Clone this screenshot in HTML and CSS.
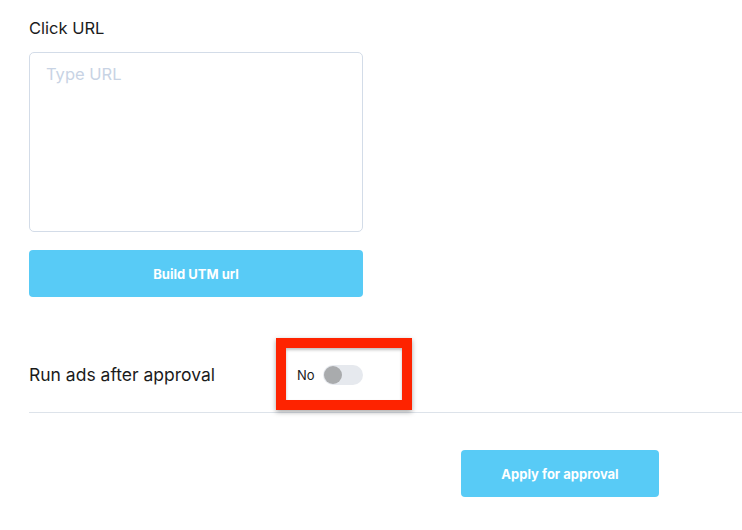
FILE: index.html
```html
<!DOCTYPE html>
<html>
<head>
<meta charset="utf-8">
<link rel="stylesheet" href="styles.css">
</head>
<body>
<div class="page">
  <div class="field">
    <label class="label">Click URL</label>
    <textarea class="url-input" placeholder="Type URL"></textarea>
    <button class="btn btn-wide">Build UTM url</button>
  </div>
  <div class="row">
    <span class="row-label">Run ads after approval</span>
    <div class="toggle-group">
      <span class="toggle-text">No</span>
      <span class="switch"><span class="knob"></span></span>
      <span class="highlight"></span>
    </div>
  </div>
  <div class="actions">
    <button class="btn btn-apply">Apply for approval</button>
  </div>
</div>
</body>
</html>
```
FILE: styles.css
```css
* { box-sizing: border-box; }
html, body { margin: 0; background: #fff; }
body {
  font-family: Inter, "Open Sans", sans-serif;
  color: #1b1b1b;
  width: 742px;
  height: 530px;
  overflow: hidden;
}
.page { padding: 17px 0 0 29px; }
.field { display: flex; flex-direction: column; width: 334px; }
.label { font-size: 16.5px; line-height: 22px; height: 22px; }
.url-input {
  margin-top: 13px;
  width: 334px;
  height: 180px;
  border: 1px solid #d3dce8;
  border-radius: 5px;
  padding: 11px 16px;
  font-family: inherit;
  font-size: 16.5px;
  resize: none;
  outline: none;
}
.url-input::placeholder { color: #c8d3e4; }
.btn {
  border: 0;
  background: #58cbf6;
  color: #fff;
  font-family: inherit;
  font-weight: 700;
  font-size: 13px;
  border-radius: 4px;
  height: 47px;
  padding: 0;
}
.btn-wide { margin-top: 18px; width: 334px; }
.row {
  margin-top: 41px;
  display: flex;
  align-items: center;
  padding: 27px 0 27px;
  border-bottom: 1px solid #dde3ea;
}
.row-label { font-size: 17.5px; width: 268px; line-height: 20px; }
.toggle-group { position: relative; display: flex; align-items: center; height: 20px; }
.toggle-text { font-size: 13px; width: 26px; }
.switch {
  width: 40px;
  height: 20px;
  border-radius: 10px;
  background: #e6e9ee;
  position: relative;
}
.knob {
  position: absolute;
  left: 1px;
  top: 1px;
  width: 18px;
  height: 18px;
  border-radius: 50%;
  background: #a9abad;
}
.highlight {
  position: absolute;
  left: -21px;
  top: -27px;
  width: 136px;
  height: 72px;
  border: 10px solid #fe2300;
  box-shadow: 0 2px 5px rgba(0,0,0,0.35), inset 0 2px 3px rgba(0,0,0,0.25);
}
.actions { padding-top: 37px; padding-left: 432px; }
.btn-apply { width: 198px; }
```
